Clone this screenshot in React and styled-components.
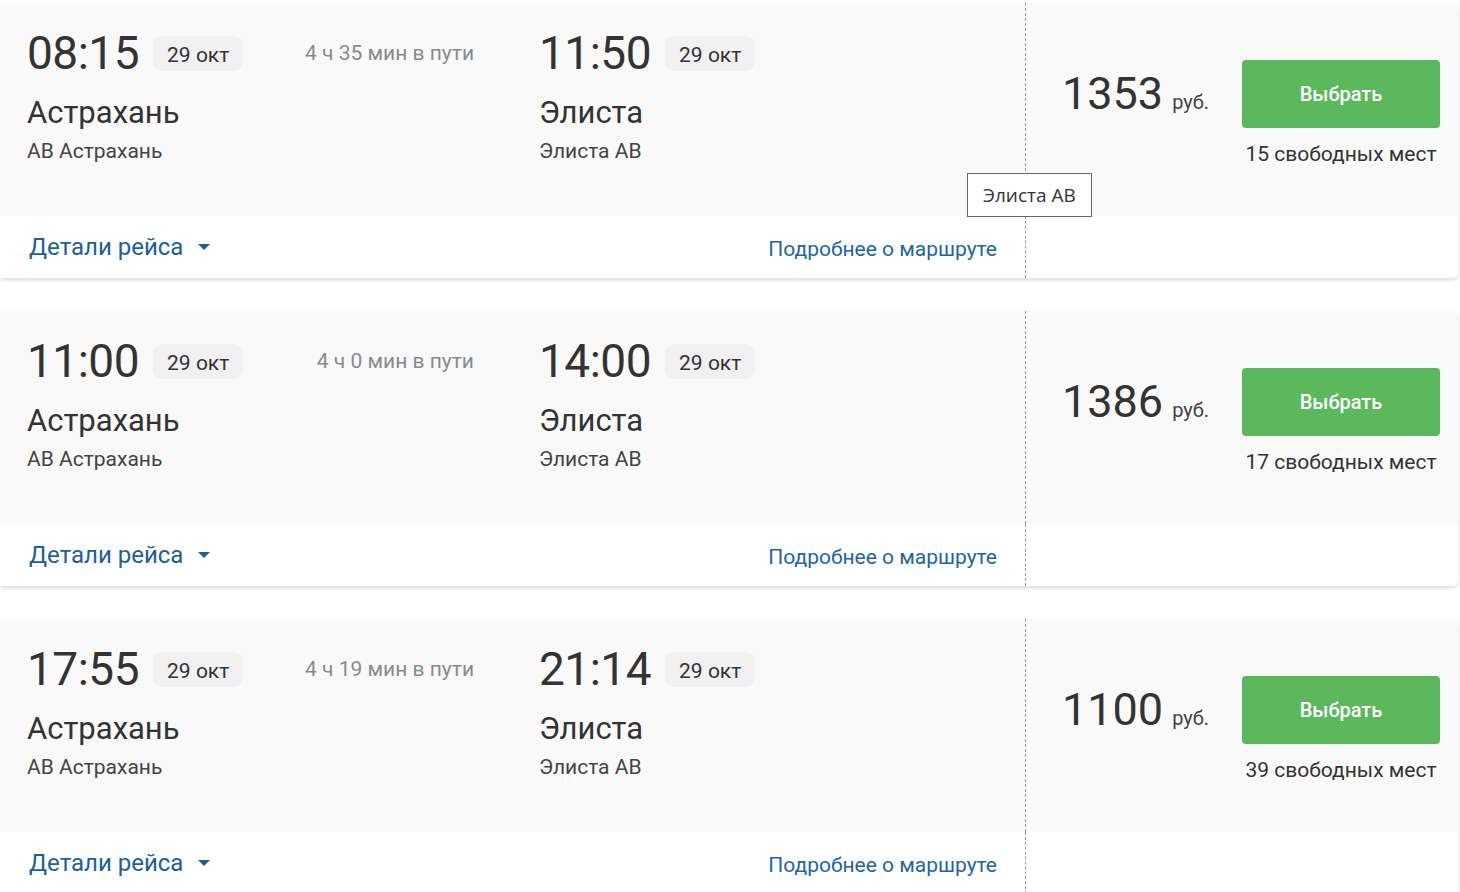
import React from 'react';
import styled, { createGlobalStyle } from 'styled-components';

const trips = [
  { dep: '08:15', arr: '11:50', duration: '4 ч 35 мин в пути', price: 1353, seats: 15, tooltip: true },
  { dep: '11:00', arr: '14:00', duration: '4 ч 0 мин в пути', price: 1386, seats: 17 },
  { dep: '17:55', arr: '21:14', duration: '4 ч 19 мин в пути', price: 1100, seats: 39 },
];

const GlobalStyle = createGlobalStyle`
  html, body {
    margin: 0;
    padding: 0;
    background: #fff;
  }
  body {
    font-family: Roboto, "Noto Sans", sans-serif;
    color: #333;
  }
`;

const Page = styled.div`
  display: flex;
  flex-direction: column;
  gap: 33px;
  padding: 3px 2px 0 0;
`;

const Card = styled.div`
  position: relative;
  display: grid;
  grid-template-columns: 1026px 1fr;
  grid-template-rows: 213px 62px;
  border-radius: 0 6px 6px 0;
  background: #fff;
  box-shadow: 0 2px 4px rgba(0, 0, 0, 0.14);
`;

const Main = styled.div`
  border-right: 1px dashed #9a9a9a;
  background: ${({ footer }) => (footer ? '#fff' : '#f9f9f9')};
`;

const Aside = styled.div`
  background: ${({ footer }) => (footer ? '#fff' : '#f9f9f9')};
  border-radius: ${({ footer }) => (footer ? '0 0 6px 0' : '0 6px 0 0')};
`;

const Route = styled(Main)`
  display: grid;
  grid-template-columns: 512px 1fr;
  padding: 26px 0 0 27px;
`;

const Point = styled.div`
  display: flex;
  flex-direction: column;
`;

const TimeRow = styled.div`
  display: flex;
  align-items: center;
  height: 48px;
`;

const Time = styled.span`
  font-size: 46px;
  line-height: 48px;
  color: #333;
  letter-spacing: -0.5px;
`;

const DateBadge = styled.span`
  margin-left: 14px;
  padding: 3px 14px 0;
  height: 35px;
  box-sizing: border-box;
  display: inline-flex;
  align-items: center;
  border-radius: 9px;
  background: #f1f1f1;
  font-size: 21px;
  color: #333;
`;

const Duration = styled.span`
  margin-left: auto;
  padding-right: 65px;
  font-size: 21px;
  color: #8a8a8a;
`;

const City = styled.div`
  margin-top: 16px;
  font-size: 31px;
  line-height: 40px;
  color: #333;
`;

const Station = styled.div`
  margin-top: 5px;
  font-size: 21px;
  line-height: 26px;
  color: #444;
`;

const Offer = styled(Aside)`
  display: flex;
  align-items: flex-start;
  padding: 57px 18px 0 36px;
`;

const Price = styled.div`
  display: flex;
  align-items: baseline;
  height: 68px;
  line-height: 68px;
  margin-right: auto;
`;

const Amount = styled.span`
  font-size: 45px;
  color: #333;
`;

const Currency = styled.span`
  margin-left: 9px;
  font-size: 20px;
  color: #444;
`;

const Booking = styled.div`
  display: flex;
  flex-direction: column;
  align-items: center;
  width: 198px;
`;

const SelectButton = styled.button`
  width: 198px;
  height: 68px;
  border: none;
  border-radius: 4px;
  background: #5cb85c;
  color: #fff;
  font-family: inherit;
  font-size: 20px;
  font-weight: 500;
  cursor: pointer;
`;

const Seats = styled.div`
  margin-top: 13px;
  font-size: 21px;
  line-height: 26px;
  color: #333;
  white-space: nowrap;
`;

const Footer = styled(Main)`
  display: flex;
  align-items: center;
  justify-content: space-between;
  padding: 0 28px 0 29px;
`;

const DetailsToggle = styled.a`
  display: inline-flex;
  align-items: center;
  font-size: 24px;
  color: #1d5f98;
  cursor: pointer;
  &::after {
    content: '';
    margin-left: 15px;
    border-left: 6px solid transparent;
    border-right: 6px solid transparent;
    border-top: 6px solid #1d5f98;
  }
`;

const RouteLink = styled.a`
  margin-top: 4px;
  font-size: 21px;
  color: #2266a0;
  cursor: pointer;
`;

const Tooltip = styled.div`
  position: absolute;
  top: 170px;
  left: 967px;
  z-index: 2;
  padding: 0 15px;
  height: 42px;
  display: flex;
  align-items: center;
  border: 1px solid #666;
  background: #fff;
  font-family: "Open Sans", "Noto Sans", sans-serif;
  font-size: 19px;
  color: #333;
`;

const Trip = ({ trip }) => (
  <Card>
    <Route>
      <Point>
        <TimeRow>
          <Time>{trip.dep}</Time>
          <DateBadge>29 окт</DateBadge>
          <Duration>{trip.duration}</Duration>
        </TimeRow>
        <City>Астрахань</City>
        <Station>АВ Астрахань</Station>
      </Point>
      <Point>
        <TimeRow>
          <Time>{trip.arr}</Time>
          <DateBadge>29 окт</DateBadge>
        </TimeRow>
        <City>Элиста</City>
        <Station>Элиста АВ</Station>
      </Point>
    </Route>
    <Offer>
      <Price>
        <Amount>{trip.price}</Amount>
        <Currency>руб.</Currency>
      </Price>
      <Booking>
        <SelectButton>Выбрать</SelectButton>
        <Seats>{trip.seats} свободных мест</Seats>
      </Booking>
    </Offer>
    <Footer footer>
      <DetailsToggle>Детали рейса</DetailsToggle>
      <RouteLink>Подробнее о маршруте</RouteLink>
    </Footer>
    <Aside footer />
    {trip.tooltip && <Tooltip>Элиста АВ</Tooltip>}
  </Card>
);

export default function App() {
  return (
    <>
      <GlobalStyle />
      <Page>
        {trips.map(trip => (
          <Trip key={trip.dep} trip={trip} />
        ))}
      </Page>
    </>
  );
}
